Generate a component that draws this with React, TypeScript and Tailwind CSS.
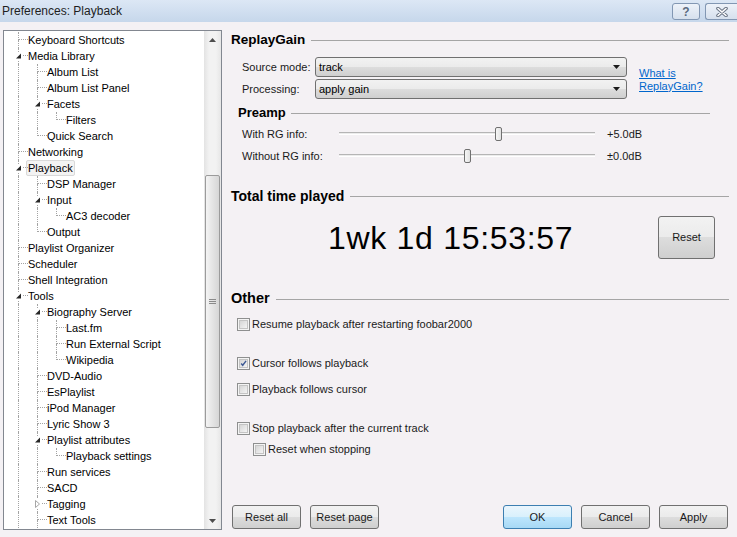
import React from "react";

type Item = { label: string; level: number; exp?: "open" | "closed"; sel?: boolean };

const items: Item[] = [
  { label: "Keyboard Shortcuts", level: 0 },
  { label: "Media Library", level: 0, exp: "open" },
  { label: "Album List", level: 1 },
  { label: "Album List Panel", level: 1 },
  { label: "Facets", level: 1, exp: "open" },
  { label: "Filters", level: 2 },
  { label: "Quick Search", level: 1 },
  { label: "Networking", level: 0 },
  { label: "Playback", level: 0, exp: "open", sel: true },
  { label: "DSP Manager", level: 1 },
  { label: "Input", level: 1, exp: "open" },
  { label: "AC3 decoder", level: 2 },
  { label: "Output", level: 1 },
  { label: "Playlist Organizer", level: 0 },
  { label: "Scheduler", level: 0 },
  { label: "Shell Integration", level: 0 },
  { label: "Tools", level: 0, exp: "open" },
  { label: "Biography Server", level: 1, exp: "open" },
  { label: "Last.fm", level: 2 },
  { label: "Run External Script", level: 2 },
  { label: "Wikipedia", level: 2 },
  { label: "DVD-Audio", level: 1 },
  { label: "EsPlaylist", level: 1 },
  { label: "iPod Manager", level: 1 },
  { label: "Lyric Show 3", level: 1 },
  { label: "Playlist attributes", level: 1, exp: "open" },
  { label: "Playback settings", level: 2 },
  { label: "Run services", level: 1 },
  { label: "SACD", level: 1 },
  { label: "Tagging", level: 1, exp: "closed" },
  { label: "Text Tools", level: 1 },
];

function buildTree() {
  const n = items.length;
  const hasNext = items.map((it, i) => {
    for (let j = i + 1; j < n; j++) {
      if (items[j].level < it.level) return false;
      if (items[j].level === it.level) return true;
    }
    return true;
  });
  const anc: boolean[] = [];
  return items.map((it, i) => {
    anc[it.level] = hasNext[i];
    return { ...it, guides: anc.slice(0, it.level), hasNext: hasNext[i] };
  });
}

const rows = buildTree();

const DOT = "border-dotted border-[#a3a3a3]";

function TreeRow({ r }: { r: ReturnType<typeof buildTree>[number] }) {
  return (
    <div className="flex h-[16px] items-stretch">
      {r.guides.map((g, k) => (
        <div key={k} className="w-[19px] shrink-0">
          {g && <div className={`ml-[9px] h-full border-l ${DOT}`} />}
        </div>
      ))}
      <div className="relative w-[19px] shrink-0">
        <div className={`ml-[9px] h-[8px] w-[10px] border-l border-b ${DOT}`} />
        {r.hasNext && <div className={`ml-[9px] h-[8px] border-l ${DOT}`} />}
        {r.exp === "open" && (
          <div className="absolute left-[5px] top-[4px] h-[8px] w-[9px] bg-white">
            <svg width="9" height="8" viewBox="0 0 9 8">
              <polygon points="7,1.5 7,6.5 2,6.5" fill="#262626" />
            </svg>
          </div>
        )}
        {r.exp === "closed" && (
          <div className="absolute left-[5px] top-[3px] h-[10px] w-[9px] bg-white">
            <svg width="9" height="10" viewBox="0 0 9 10">
              <polygon points="2.5,1.5 6.5,5 2.5,8.5" fill="none" stroke="#a6a6a6" strokeWidth="1" />
            </svg>
          </div>
        )}
      </div>
      <div className="flex items-center">
        {r.sel ? (
          <span className="-ml-[2px] rounded-[2px] border border-[#d9d9d9] bg-[#f3f3f3] px-[1px] leading-[14px]">
            {r.label}
          </span>
        ) : (
          <span className="leading-[14px]">{r.label}</span>
        )}
      </div>
    </div>
  );
}

function Scrollbar() {
  return (
    <div className="flex w-[17px] shrink-0 flex-col bg-[linear-gradient(to_right,#e3e3e3,#f2f2f2_30%,#f2f2f2_70%,#e6e6e6)]">
      <div className="flex h-[17px] items-center justify-center">
        <svg width="7" height="4" viewBox="0 0 7 4">
          <polygon points="0,4 3.5,0 7,4" fill="#4d4d4d" />
        </svg>
      </div>
      <div className="h-[127px]" />
      <div className="mx-[1px] flex h-[253px] items-center justify-center rounded-[2px] border border-[#9b9b9b] bg-[linear-gradient(to_right,#f4f4f4,#e6e6e6_45%,#d6d6d6)]">
        <div className="flex flex-col gap-[1px]">
          <div className="h-px w-[7px] bg-[#8a8a8a]" />
          <div className="h-px w-[7px] bg-[#8a8a8a]" />
          <div className="h-px w-[7px] bg-[#8a8a8a]" />
        </div>
      </div>
      <div className="flex-1" />
      <div className="flex h-[17px] items-center justify-center">
        <svg width="7" height="4" viewBox="0 0 7 4">
          <polygon points="0,0 3.5,4 7,0" fill="#4d4d4d" />
        </svg>
      </div>
    </div>
  );
}

function Combo({ value }: { value: string }) {
  return (
    <div className="flex h-[20px] w-[312px] items-center rounded-[3px] border border-[#707070] bg-[linear-gradient(to_bottom,#f2f2f2_0%,#ebebeb_50%,#dddddd_50%,#cfcfcf_100%)] pl-[3px] pr-[6px]">
      <span className="flex-1 text-black">{value}</span>
      <svg width="7" height="4" viewBox="0 0 7 4">
        <polygon points="0,0 7,0 3.5,4" fill="#1a1a1a" />
      </svg>
    </div>
  );
}

function Slider({ pos }: { pos: number }) {
  return (
    <div className="relative h-[20px] w-[256px]">
      <div className="absolute left-0 right-0 top-[8px] h-[3px] border-t border-[#b5b5b5] bg-[#ececec] border-b border-b-white" />
      <div
        className="absolute top-[3px] h-[14px] w-[7px] rounded-[2px] border border-[#707070] bg-[linear-gradient(to_right,#f6f6f6,#e2e2e2)]"
        style={{ left: pos }}
      />
    </div>
  );
}

function Header({ text, size, mr = 0 }: { text: string; size: string; mr?: number }) {
  return (
    <div className="flex h-[18px] items-center" style={{ marginRight: mr }}>
      <span className={`font-bold text-black ${size}`}>{text}</span>
      <div className="ml-[6px] h-px flex-1 bg-[#a5a5a5]" />
    </div>
  );
}

function Check({ checked = false }: { checked?: boolean }) {
  return (
    <div className="flex h-[13px] w-[13px] shrink-0 items-center justify-center border border-[#8e8f8f] bg-[#f4f4f4]">
      <div className="flex h-[9px] w-[9px] items-center justify-center border border-[#c4c4c4] bg-[linear-gradient(135deg,#d6d6d6,#f4f4f4)]">
        {checked && (
          <svg width="9" height="9" viewBox="0 0 9 9">
            <path d="M1.5 4.5 L3.5 6.8 L7.8 1.2" fill="none" stroke="#3e5a94" strokeWidth="1.8" />
          </svg>
        )}
      </div>
    </div>
  );
}

function CheckRow({ label, checked, mt, indent = 6 }: { label: string; checked?: boolean; mt: string; indent?: number }) {
  return (
    <div className={`flex h-[16px] items-center gap-[2px] ${mt}`} style={{ paddingLeft: indent }}>
      <Check checked={checked} />
      <span className="text-[#1a1a1a]">{label}</span>
    </div>
  );
}

function Btn({ label, primary = false }: { label: string; primary?: boolean }) {
  return (
    <div
      className={
        primary
          ? "flex h-[24px] w-[69px] items-center justify-center rounded-[3px] border border-[#3c7fb1] bg-[linear-gradient(to_bottom,#eaf6fd_0%,#d9f0fc_50%,#bee6fd_50%,#a7d9f5_100%)] text-[#1a1a1a]"
          : "flex h-[24px] w-[69px] items-center justify-center rounded-[3px] border border-[#707070] bg-[linear-gradient(to_bottom,#f2f2f2_0%,#ebebeb_50%,#dddddd_50%,#cfcfcf_100%)] text-[#1a1a1a]"
      }
    >
      {label}
    </div>
  );
}

export default function App() {
  return (
    <div className="flex h-[537px] w-[737px] flex-col overflow-hidden bg-[#f4f1f4] font-['Liberation_Sans',Arial,sans-serif] text-[11px] text-black">
      {/* Title bar */}
      <div className="flex h-[22px] shrink-0 items-center bg-[linear-gradient(to_bottom,#dce7f5,#c6d7eb)] pl-[2px]">
        <span className="text-[12px] text-[#1e1e1e]">Preferences: Playback</span>
        <div className="ml-auto flex items-center gap-[5px] self-start pt-[3px]">
          <div className="flex h-[17px] w-[28px] items-center justify-center rounded-[3px] border border-[#8297b3] bg-[linear-gradient(to_bottom,#edf2f9,#d6e0ed)]">
            <span className="text-[12px] font-bold leading-none text-[#5b6a7e]">?</span>
          </div>
          <div className="flex h-[17px] w-[32px] items-center justify-center rounded-l-[3px] border border-r-0 border-[#8297b3] bg-[linear-gradient(to_bottom,#edf2f9,#d6e0ed)]">
            <svg width="12" height="10" viewBox="0 0 12 10">
              <path d="M2 1.5 L10 8.5 M10 1.5 L2 8.5" stroke="#6b7585" strokeWidth="3.6" strokeLinecap="round" />
              <path d="M2 1.5 L10 8.5 M10 1.5 L2 8.5" stroke="#ffffff" strokeWidth="1.6" strokeLinecap="round" />
            </svg>
          </div>
        </div>
      </div>

      {/* Body */}
      <div className="flex flex-1 pt-[8px]">
        {/* Tree */}
        <div className="ml-[3px] flex h-[500px] w-[219px] shrink-0 border border-[#828790] bg-white">
          <div className="flex-1 overflow-hidden pt-[1px] pl-[5px]">
            {rows.map((r, i) => (
              <TreeRow key={i} r={r} />
            ))}
          </div>
          <Scrollbar />
        </div>

        {/* Right panel */}
        <div className="ml-[9px] flex w-[498px] flex-col pb-[8px] text-[#1a1a1a]">
          <div className="mt-[1px]">
            <Header text="ReplayGain" size="text-[13.5px]" />
          </div>

          <div className="mt-[8px] flex items-center">
            <div className="flex flex-col gap-[2px]">
              <div className="flex items-center">
                <span className="w-[84px] pl-[11px]">Source mode:</span>
                <Combo value="track" />
              </div>
              <div className="flex items-center">
                <span className="w-[84px] pl-[11px]">Processing:</span>
                <Combo value="apply gain" />
              </div>
            </div>
            <div className="ml-[12px] mt-[3px] flex flex-col text-[#0066cc] underline leading-[13px]">
              <span>What is</span>
              <span>ReplayGain?</span>
            </div>
          </div>

          <div className="mt-[6px] pl-[7px]">
            <div className="flex h-[16px] items-center mr-[19px]">
              <span className="text-[13px] font-bold text-black">Preamp</span>
              <div className="ml-[5px] h-px flex-1 bg-[#a5a5a5]" />
            </div>
          </div>

          <div className="mt-[3px] flex h-[20px] items-center">
            <span className="w-[108px] pl-[11px]">With RG info:</span>
            <Slider pos={156} />
            <span className="ml-[12px]">+5.0dB</span>
          </div>
          <div className="mt-[2px] flex h-[20px] items-center">
            <span className="w-[108px] pl-[11px]">Without RG info:</span>
            <Slider pos={125} />
            <span className="ml-[12px]">±0.0dB</span>
          </div>

          <div className="mt-[21px]">
            <Header text="Total time played" size="text-[14px]" />
          </div>

          <div className="mt-[11px] flex h-[43px] items-center">
            <span className="pl-[97px] text-[32px] leading-none tracking-[0.7px] text-black">1wk 1d 15:53:57</span>
            <div className="ml-auto mr-[14px] flex h-[43px] w-[57px] items-center justify-center rounded-[3px] border border-[#707070] bg-[linear-gradient(to_bottom,#f2f2f2_0%,#ebebeb_50%,#dddddd_50%,#cfcfcf_100%)]">
              Reset
            </div>
          </div>

          <div className="mt-[31px]">
            <Header text="Other" size="text-[14.5px]" />
          </div>

          <CheckRow mt="mt-[8px]" label="Resume playback after restarting foobar2000" />
          <CheckRow mt="mt-[23px]" label="Cursor follows playback" checked />
          <CheckRow mt="mt-[10px]" label="Playback follows cursor" />
          <CheckRow mt="mt-[23px]" label="Stop playback after the current track" />
          <CheckRow mt="mt-[5px]" label="Reset when stopping" indent={22} />

          <div className="mt-auto flex items-center pl-[1px] pr-[1px]">
            <div className="flex gap-[9px]">
              <Btn label="Reset all" />
              <Btn label="Reset page" />
            </div>
            <div className="ml-auto flex gap-[9px]">
              <Btn label="OK" primary />
              <Btn label="Cancel" />
              <Btn label="Apply" />
            </div>
          </div>
        </div>
      </div>
    </div>
  );
}
